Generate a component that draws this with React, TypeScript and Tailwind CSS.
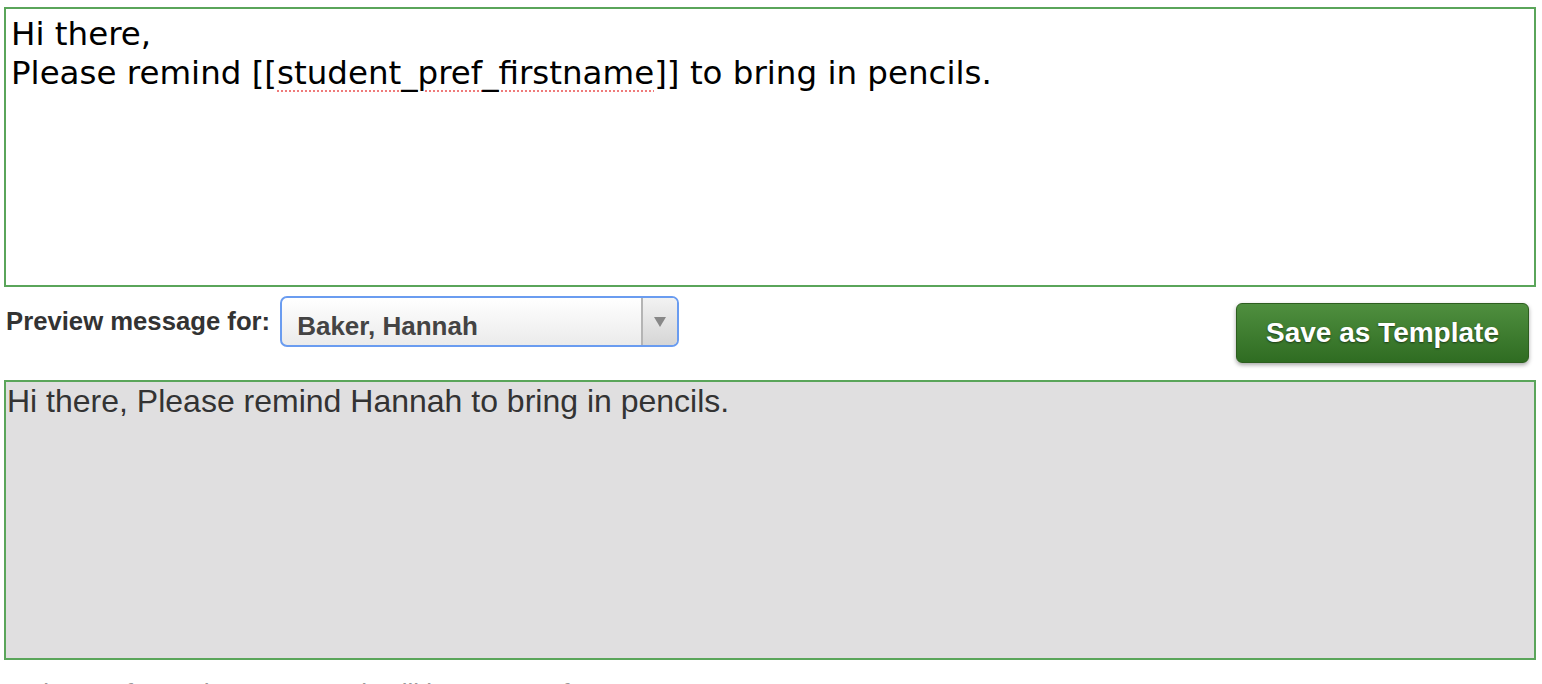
import React from "react";

export default function App() {
  return (
    <div className="w-[1542px] h-[684px] overflow-hidden bg-white pt-[7px] pl-[4px] pr-[6px]">
      <div className="h-[280px] border-2 border-[#5aa55a] bg-white px-[5px] pt-[6px] text-[32.5px] leading-[39px] text-black font-['DejaVu_Sans',sans-serif]">
        <div>Hi there,</div>
        <div>
          Please remind [[
          <span className="underline decoration-dotted decoration-[#ef7a7a] decoration-2 underline-offset-[6px]">
            student_pref_firstname
          </span>
          ]] to bring in pencils.
        </div>
      </div>

      <div className="flex items-start justify-between h-[93px] pt-[9px] font-['Liberation_Sans',Arial,sans-serif]">
        <div className="flex items-start">
          <span className="mt-[6px] ml-[2px] text-[25.7px] font-bold text-[#333]">Preview message for:</span>
          <div className="ml-[10px] flex h-[51px] w-[399px] items-stretch rounded-[7px] border-2 border-[#6a9cf0] bg-gradient-to-b from-white to-[#ebebeb] overflow-hidden">
            <span className="flex-1 pl-[15px] pt-[9px] text-[26px] font-bold text-[#444]">Baker, Hannah</span>
            <span className="flex w-[36px] items-center justify-center border-l-2 border-[#b4b4b4] bg-gradient-to-b from-[#f2f2f2] to-[#d6d6d6]">
              <svg width="12" height="10" viewBox="0 0 12 10">
                <path d="M0 0 L12 0 L6 10 Z" fill="#888" />
              </svg>
            </span>
          </div>
        </div>
        <button className="mt-[7px] mr-[7px] flex h-[60px] w-[293px] items-center justify-center rounded-[6px] border border-[#2d5e1f] bg-gradient-to-b from-[#4f8f3f] to-[#2f6c22] text-[28px] font-bold text-white shadow-[0_2px_4px_rgba(0,0,0,0.35)] [text-shadow:0_1px_2px_rgba(0,0,0,0.5)]">
          Save as Template
        </button>
      </div>

      <div className="h-[280px] border-2 border-[#5aa55a] bg-[#e0dfe0] px-[1px] pt-[1px] text-[32px] leading-[36px] text-[#333] font-['Liberation_Sans',Arial,sans-serif]">
        Hi there, Please remind Hannah to bring in pencils.
      </div>

      <div className="mt-[18px] pl-[22px] text-[26px] leading-[30px] text-[#999] font-['Liberation_Sans',Arial,sans-serif]">
        Pieces of 160 characters each will be sent: 1 of 1
      </div>
    </div>
  );
}
